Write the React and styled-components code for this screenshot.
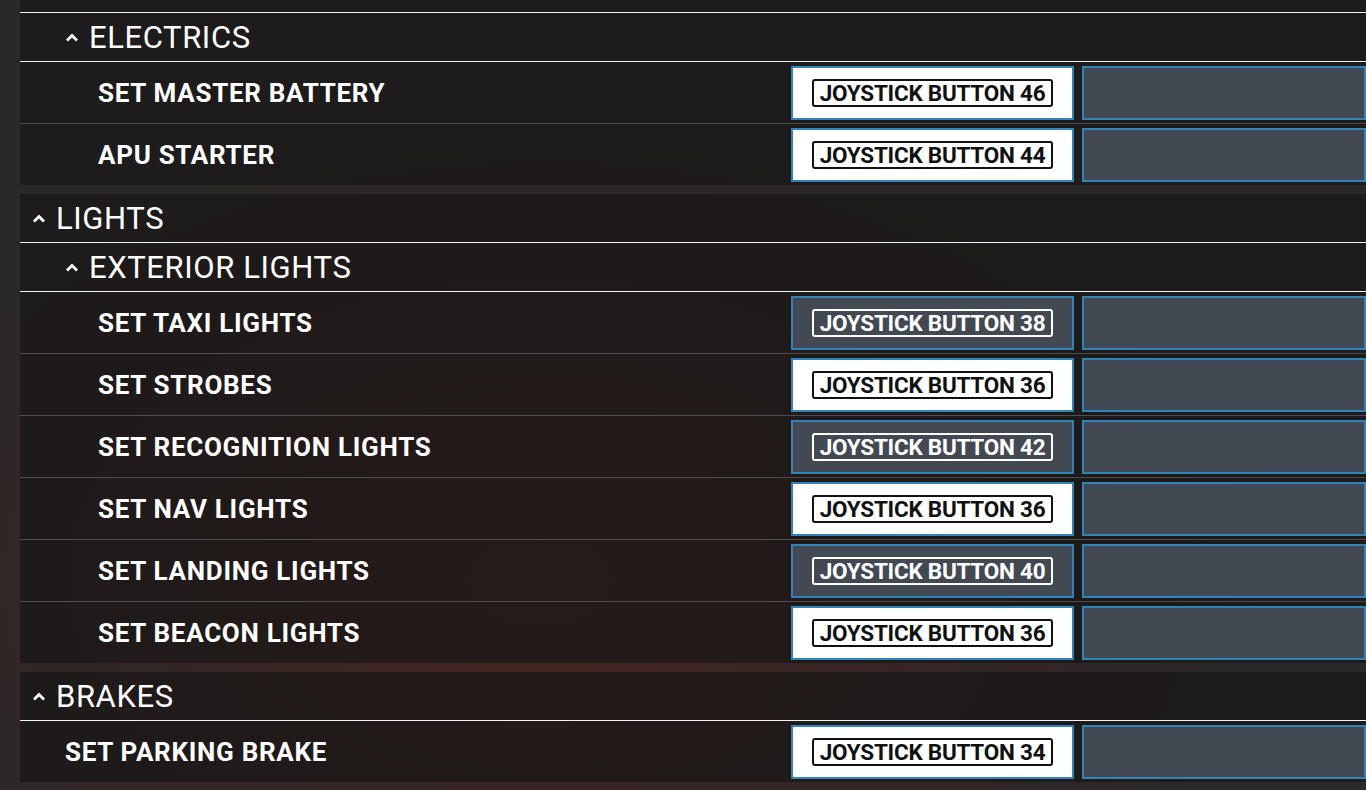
import React from 'react';
import styled, { createGlobalStyle } from 'styled-components';

const GlobalStyle = createGlobalStyle`
    html, body {
        margin: 0;
        padding: 0;
        height: 100%;
        overflow: hidden;
    }
    body {
        font-family: Roboto, "Liberation Sans", Arial, sans-serif;
        background: #2a2828;
        background-image: radial-gradient(ellipse 720px 460px at 540px 580px, #4a2725 0%, #362524 45%, #2a2828 100%);
        color: #fff;
    }
`;

const Page = styled.div`
    width: 1366px;
    height: 790px;
    padding-left: 20px;
    box-sizing: border-box;
    display: flex;
    flex-direction: column;
`;

const ScrollEdge = styled.div`
    height: 12px;
    flex-shrink: 0;
    background: rgba(24, 22, 22, 0.7);
    border-bottom: 1px solid #f2f2f2;
`;

const Group = styled.section`
    display: flex;
    flex-direction: column;
    margin-bottom: 9px;
`;

const Header = styled.div`
    display: flex;
    align-items: center;
    gap: 10px;
    height: 48px;
    flex-shrink: 0;
    padding-left: ${p => p.$indent}px;
    background: rgba(24, 22, 22, 0.7);
    border-bottom: 1px solid #f2f2f2;
    font-size: 31px;
    font-weight: 400;
    letter-spacing: 0.6px;
`;

const Row = styled.div`
    display: flex;
    align-items: center;
    height: 61px;
    flex-shrink: 0;
    background: rgba(24, 22, 22, 0.7);
    border-bottom: 1px solid rgba(255, 255, 255, 0.22);
    &:last-child {
        border-bottom: none;
    }
`;

const RowName = styled.div`
    flex: 1;
    padding-left: ${p => p.$indent}px;
    font-size: 26px;
    font-weight: 700;
    letter-spacing: 0.7px;
`;

const Cells = styled.div`
    display: flex;
    gap: 8px;
    height: 100%;
    align-items: center;
`;

const Cell = styled.div`
    width: ${p => (p.$wide ? 284 : 283)}px;
    height: 54px;
    box-sizing: border-box;
    display: flex;
    align-items: center;
    justify-content: center;
    border: 2px solid #2f84ba;
    background: ${p => (p.$light ? '#ffffff' : '#434952')};
`;

const Binding = styled.div`
    width: 241px;
    height: 28px;
    box-sizing: border-box;
    display: flex;
    align-items: center;
    justify-content: center;
    border: 2px solid ${p => (p.$light ? '#111' : '#fff')};
    border-radius: 3px;
    color: ${p => (p.$light ? '#111' : '#fff')};
    font-size: 22.5px;
    font-weight: 700;
    letter-spacing: -0.25px;
    white-space: nowrap;
`;

const Caret = () => (
    <svg width="14" height="10" viewBox="0 0 14 10">
        <polyline points="2,8.5 7,3.5 12,8.5" fill="none" stroke="#fff" strokeWidth="2.8" />
    </svg>
);

function Item({ name, indent, binding, light }) {
    return (
        <Row>
            <RowName $indent={indent}>{name}</RowName>
            <Cells>
                <Cell $light={light}>
                    <Binding $light={light}>{binding}</Binding>
                </Cell>
                <Cell $wide />
            </Cells>
        </Row>
    );
}

const lights = [
    ['SET TAXI LIGHTS', 'JOYSTICK BUTTON 38', false],
    ['SET STROBES', 'JOYSTICK BUTTON 36', true],
    ['SET RECOGNITION LIGHTS', 'JOYSTICK BUTTON 42', false],
    ['SET NAV LIGHTS', 'JOYSTICK BUTTON 36', true],
    ['SET LANDING LIGHTS', 'JOYSTICK BUTTON 40', false],
    ['SET BEACON LIGHTS', 'JOYSTICK BUTTON 36', true],
];

export default function App() {
    return (
        <>
            <GlobalStyle />
            <Page>
                <ScrollEdge />
                <Group>
                    <Header $indent={45}><Caret />ELECTRICS</Header>
                    <Item name="SET MASTER BATTERY" indent={78} binding="JOYSTICK BUTTON 46" light />
                    <Item name="APU STARTER" indent={78} binding="JOYSTICK BUTTON 44" light />
                </Group>
                <Group>
                    <Header $indent={12}><Caret />LIGHTS</Header>
                    <Header $indent={45}><Caret />EXTERIOR LIGHTS</Header>
                    {lights.map(([name, binding, light], i) => (
                        <Item key={i} name={name} indent={78} binding={binding} light={light} />
                    ))}
                </Group>
                <Group>
                    <Header $indent={12}><Caret />BRAKES</Header>
                    <Item name="SET PARKING BRAKE" indent={45} binding="JOYSTICK BUTTON 34" light />
                </Group>
            </Page>
        </>
    );
}
